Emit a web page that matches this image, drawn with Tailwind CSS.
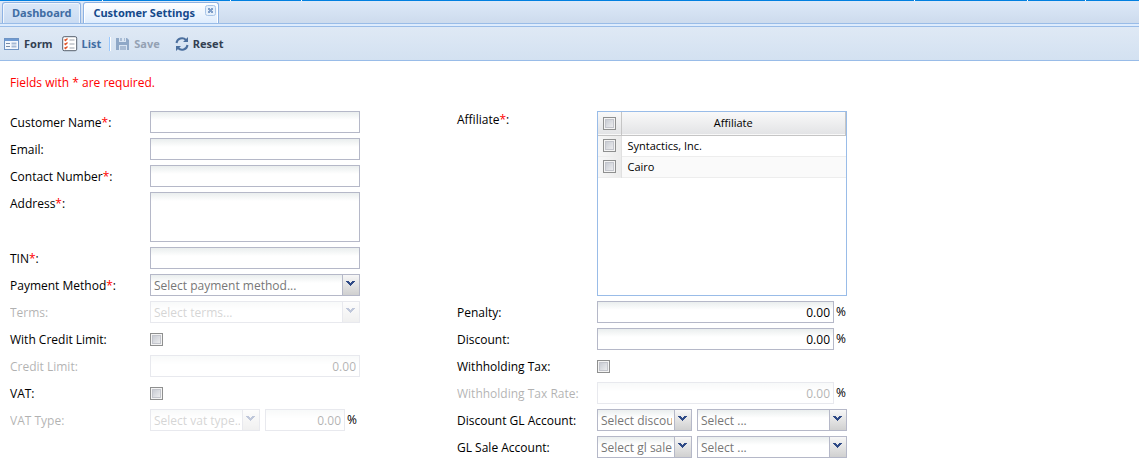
<!DOCTYPE html>
<html lang="en">
<head>
<meta charset="utf-8">
<meta name="viewport" content="width=device-width, initial-scale=1">
<title>Customer Settings</title>
<script src="https://cdn.jsdelivr.net/npm/@tailwindcss/browser@4"></script>
</head>
<body class="bg-white text-black text-[12px] leading-4 font-['Open_Sans','Noto_Sans',sans-serif]">
<svg class="hidden">
  <symbol id="arrow" viewBox="0 0 9 6"><path d="M0 0h3v1h1v1h1v-1h1v-1h3v1h-1v1h-1v1h-1v1h-1v1h-1v-1h-1v-1h-1v-1h-1v-1h-1z" fill="#2f4a86"/></symbol>
</svg>
<div class="flex h-px bg-[#007fe0]" aria-hidden="true">
  <i class="ml-[102px] w-px bg-white"></i><i class="ml-[127px] w-px bg-white"></i><i class="ml-[70px] w-px bg-white"></i><i class="ml-[612px] w-px bg-white"></i><i class="ml-[112px] w-px bg-white"></i><i class="ml-[57px] w-px bg-white"></i>
</div>
<nav class="flex h-[22px] items-end gap-[2px] bg-linear-to-b from-[#dde9f8] to-[#cddbed] pl-[2px] font-['Noto_Sans',sans-serif] text-[11px] font-bold">
  <button type="button" class="h-[21px] rounded-t-[3px] border border-b-0 border-[#8db2e3] bg-linear-to-b from-[#dbe8f8] to-[#c9dbf2] px-[9px] text-[#416da3] shadow-[inset_1px_1px_0_#f0f6fd,inset_-1px_0_0_#f0f6fd]">Dashboard</button>
  <div class="relative flex h-[21px] items-center rounded-t-[3px] border border-b-0 border-[#8db2e3] bg-linear-to-b from-white to-[#deecfd] pl-[9px] pr-[23px] text-[#15498b] shadow-[inset_1px_1px_0_#fff,inset_-1px_0_0_#fff]">
    <button type="button" class="font-bold">Customer Settings</button>
    <button type="button" aria-label="Close tab" class="absolute right-[2px] top-[2px] size-[11px]">
      <svg viewBox="0 0 11 11" class="block size-[11px]"><rect x=".5" y=".5" width="10" height="10" rx="2" fill="#e6f0fb" stroke="#a9c5e8"/><path d="M3 3h2v1h1v-1h2v2h-1v1h1v2h-2v-1h-1v1h-2v-2h1v-1h-1z" fill="#7f9ec9"/></svg>
    </button>
  </div>
</nav>
<div class="h-[4px] border-y border-[#99bce8] bg-[#deecfd]"></div>
<div class="flex h-[34px] items-center border-b border-[#99bce8] bg-linear-to-b from-[#dfe9f5] to-[#d3e1f1] pl-[4px] font-['Noto_Sans',sans-serif] text-[11px] font-bold text-[#333f52]">
  <button type="button" class="flex items-center gap-[4px]">
    <svg viewBox="0 0 16 16" class="size-4"><rect x=".5" y="2.500" width="14" height="11" fill="#f4f8fd" stroke="#6f94c4"/><path d="M1 3h13v2H1z" fill="#6f9bd3"/><path d="M2 7.500h4M2 10.500h4" stroke="#7a8ca6"/><path d="M7.500 7.500h5M7.500 10.500h5" stroke="#a5b9d5" stroke-width="2"/></svg>Form</button>
  <button type="button" class="ml-[9px] flex items-center gap-[4px] text-[#416da3]">
    <svg viewBox="0 0 16 16" class="size-4"><rect x=".7" y=".7" width="14" height="14" rx="1.500" fill="#fff" stroke="#555f6d"/><path d="M2.500 3.500l1 1 2-2M2.500 7.500l1 1 2-2M2.500 11.500l1 1 2-2" fill="none" stroke="#e0532a" stroke-width="1.300"/><path d="M7.500 4h5M7.500 8h5M7.500 12h5" stroke="#9da4ad"/></svg>List</button>
  <span class="ml-[8px] h-[14px] w-[2px] border-l border-[#98c8ff] bg-white"></span>
  <button type="button" disabled class="ml-[4px] flex items-center gap-[3px] text-[#94a1b3]">
    <svg viewBox="0 0 16 16" class="size-4"><path d="M1 2h3v4h7V2h1l2 2v10h-2V9H4v5H1z" fill="#8fa8c7"/><path d="M5 2h2v3H5zM9 2h1v3H9zM5 10h6v4H5z" fill="#a9bcd4"/></svg>Save</button>
  <button type="button" class="ml-[14px] flex items-center gap-[3px]">
    <svg viewBox="0 0 16 16" class="size-4"><path d="M2.500 7a5.500 5.500 0 0 1 9.500-3M13.500 9a5.500 5.500 0 0 1-9.500 3" fill="none" stroke="#4b6f9e" stroke-width="2"/><path d="M14 1v5H9zM2 15v-5h5z" fill="#4b6f9e"/></svg>Reset</button>
</div>
<main class="px-[10px] pt-[14px]">
<p class="text-[#ff0000]">Fields with * are required.</p>
<form class="mt-[20px] flex flex-wrap items-start gap-x-[97px] [&_b]:font-normal [&_b]:text-[#ff0000] [&_label]:pt-[2px]
  [&_input[type=text]]:h-[22px] [&_input[type=text]]:min-w-0 [&_input[type=text]]:border [&_input[type=text]]:border-[#b5b8c8] [&_input[type=text]]:bg-linear-to-b [&_input[type=text]]:from-[#eaeeee] [&_input[type=text]]:to-white [&_input[type=text]]:to-[8px] [&_input[type=text]]:px-[3px] [&_input[type=text]]:text-right
  [&_select]:h-[22px] [&_select]:w-full [&_select]:appearance-none [&_select]:border [&_select]:border-[#b5b8c8] [&_select]:bg-linear-to-b [&_select]:from-[#eaeeee] [&_select]:to-white [&_select]:to-[8px] [&_select]:pt-[2px] [&_select]:pl-[3px] [&_select]:pr-[19px] [&_select]:text-[#777777] [&_select]:opacity-100
  [&_input[type=checkbox]]:block [&_input[type=checkbox]]:size-[13px] [&_input[type=checkbox]]:appearance-none [&_input[type=checkbox]]:border [&_input[type=checkbox]]:border-[#8e8f8f] [&_input[type=checkbox]]:bg-linear-to-br [&_input[type=checkbox]]:from-[#bfc3cc] [&_input[type=checkbox]]:to-[#f6f6f6] [&_input[type=checkbox]]:shadow-[inset_0_0_0_1px_#f4f4f4,inset_0_0_0_2px_#c3c5cc]">
  <div class="flex w-[350px] flex-col gap-[5px]">
    <div class="flex items-center"><label for="name" class="w-[140px]">Customer Name<b>*</b>:</label><input id="name" type="text" class="flex-1"></div>
    <div class="flex items-center"><label for="email" class="w-[140px]">Email:</label><input id="email" type="text" class="flex-1"></div>
    <div class="flex items-center"><label for="contact" class="w-[140px]">Contact Number<b>*</b>:</label><input id="contact" type="text" class="flex-1"></div>
    <div class="flex items-start"><label for="address" class="mt-[2px] w-[140px]">Address<b>*</b>:</label><textarea id="address" class="block h-[50px] flex-1 resize-none border border-[#b5b8c8] bg-linear-to-b from-[#eaeeee] to-white to-[8px] px-[3px]"></textarea></div>
    <div class="flex items-center"><label for="tin" class="w-[140px]">TIN<b>*</b>:</label><input id="tin" type="text" class="flex-1"></div>
    <div class="flex items-center"><label for="pay" class="w-[140px]">Payment Method<b>*</b>:</label>
      <div class="relative flex-1"><select id="pay"><option>Select payment method...</option></select><span class="pointer-events-none absolute right-px top-px flex h-[20px] w-[17px] items-center justify-center border-l border-[#b5b8c8] bg-linear-to-b from-[#f7f7f7] to-[#d0d0d0] pr-px pb-[2px]"><svg class="h-[6px] w-[9px]"><use href="#arrow"/></svg></span></div></div>
    <div class="flex items-center opacity-30"><label for="terms" class="w-[140px]">Terms:</label>
      <div class="relative flex-1"><select id="terms" disabled><option>Select terms...</option></select><span class="pointer-events-none absolute right-px top-px flex h-[20px] w-[17px] items-center justify-center border-l border-[#b5b8c8] bg-linear-to-b from-[#f7f7f7] to-[#d0d0d0] pr-px pb-[2px]"><svg class="h-[6px] w-[9px]"><use href="#arrow"/></svg></span></div></div>
    <div class="flex h-[22px] items-center"><label for="wcl" class="w-[140px]">With Credit Limit:</label><input id="wcl" type="checkbox"></div>
    <div class="flex items-center opacity-30"><label for="limit" class="w-[140px]">Credit Limit:</label><input id="limit" type="text" value="0.00" disabled class="flex-1"></div>
    <div class="flex h-[22px] items-center"><label for="vat" class="w-[140px]">VAT:</label><input id="vat" type="checkbox"></div>
    <div class="flex items-center"><label for="vtype" class="w-[140px] opacity-30">VAT Type:</label>
      <div class="relative w-[110px] opacity-30"><select id="vtype" disabled><option>Select vat type...</option></select><span class="pointer-events-none absolute right-px top-px flex h-[20px] w-[17px] items-center justify-center border-l border-[#b5b8c8] bg-linear-to-b from-[#f7f7f7] to-[#d0d0d0] pr-px pb-[2px]"><svg class="h-[6px] w-[9px]"><use href="#arrow"/></svg></span></div>
      <input type="text" aria-label="VAT rate" value="0.00" disabled class="ml-[5px] w-[80px] opacity-30"><span class="ml-[2px]">%</span></div>
  </div>
  <div class="flex w-[390px] flex-col gap-[5px]">
    <div class="flex items-start"><span class="w-[140px] pt-px">Affiliate<b>*</b>:</span>
      <div class="h-[185px] flex-1 border border-[#99bce8]">
        <table class="w-full table-fixed border-collapse text-[11px] leading-[14px] [&_label]:pt-0">
          <thead><tr class="h-[23px] border-b border-[#c5c5c5] bg-linear-to-b from-[#f9f9f9] to-[#e3e4e6]"><th class="w-[23px] border-r border-[#c5c5c5] p-0 pl-[5px]"><input type="checkbox" aria-label="Select all"></th><th class="border-r border-[#c5c5c5] p-0 font-normal">Affiliate</th></tr></thead>
          <tbody>
            <tr class="h-[21px] border-b border-[#ededed]"><td class="border-r border-[#e0e0e0] bg-linear-to-r from-[#f7f7f7] to-[#ebebeb] p-0 pl-[5px]"><input id="a1" type="checkbox"></td><td class="p-0 pl-[6px]"><label for="a1">Syntactics, Inc.</label></td></tr>
            <tr class="h-[21px] border-b border-[#ededed] bg-[#fafafa]"><td class="border-r border-[#e0e0e0] bg-linear-to-r from-[#f7f7f7] to-[#ebebeb] p-0 pl-[5px]"><input id="a2" type="checkbox"></td><td class="p-0 pl-[6px]"><label for="a2">Cairo</label></td></tr>
          </tbody>
        </table>
      </div></div>
    <div class="flex items-center"><label for="penalty" class="w-[140px]">Penalty:</label><input id="penalty" type="text" value="0.00" class="w-[237px]"><span class="ml-[2px]">%</span></div>
    <div class="flex items-center"><label for="discount" class="w-[140px]">Discount:</label><input id="discount" type="text" value="0.00" class="w-[237px]"><span class="ml-[2px]">%</span></div>
    <div class="flex h-[22px] items-center"><label for="wt" class="w-[140px]">Withholding Tax:</label><input id="wt" type="checkbox"></div>
    <div class="flex items-center"><label for="wtr" class="w-[140px] opacity-30">Withholding Tax Rate:</label><input id="wtr" type="text" value="0.00" disabled class="w-[237px] opacity-30"><span class="ml-[2px]">%</span></div>
    <div class="flex items-center"><label for="dgl" class="w-[140px]">Discount GL Account:</label>
      <div class="relative w-[95px]"><select id="dgl"><option>Select discount gl account...</option></select><span class="pointer-events-none absolute right-px top-px flex h-[20px] w-[17px] items-center justify-center border-l border-[#b5b8c8] bg-linear-to-b from-[#f7f7f7] to-[#d0d0d0] pr-px pb-[2px]"><svg class="h-[6px] w-[9px]"><use href="#arrow"/></svg></span></div>
      <div class="relative ml-[5px] flex-1"><select aria-label="Discount GL account name"><option>Select ...</option></select><span class="pointer-events-none absolute right-px top-px flex h-[20px] w-[17px] items-center justify-center border-l border-[#b5b8c8] bg-linear-to-b from-[#f7f7f7] to-[#d0d0d0] pr-px pb-[2px]"><svg class="h-[6px] w-[9px]"><use href="#arrow"/></svg></span></div></div>
    <div class="flex items-center"><label for="gls" class="w-[140px]">GL Sale Account:</label>
      <div class="relative w-[95px]"><select id="gls"><option>Select gl sale account...</option></select><span class="pointer-events-none absolute right-px top-px flex h-[20px] w-[17px] items-center justify-center border-l border-[#b5b8c8] bg-linear-to-b from-[#f7f7f7] to-[#d0d0d0] pr-px pb-[2px]"><svg class="h-[6px] w-[9px]"><use href="#arrow"/></svg></span></div>
      <div class="relative ml-[5px] flex-1"><select aria-label="GL sale account name"><option>Select ...</option></select><span class="pointer-events-none absolute right-px top-px flex h-[20px] w-[17px] items-center justify-center border-l border-[#b5b8c8] bg-linear-to-b from-[#f7f7f7] to-[#d0d0d0] pr-px pb-[2px]"><svg class="h-[6px] w-[9px]"><use href="#arrow"/></svg></span></div></div>
  </div>
</form>
</main>
</body>
</html>
